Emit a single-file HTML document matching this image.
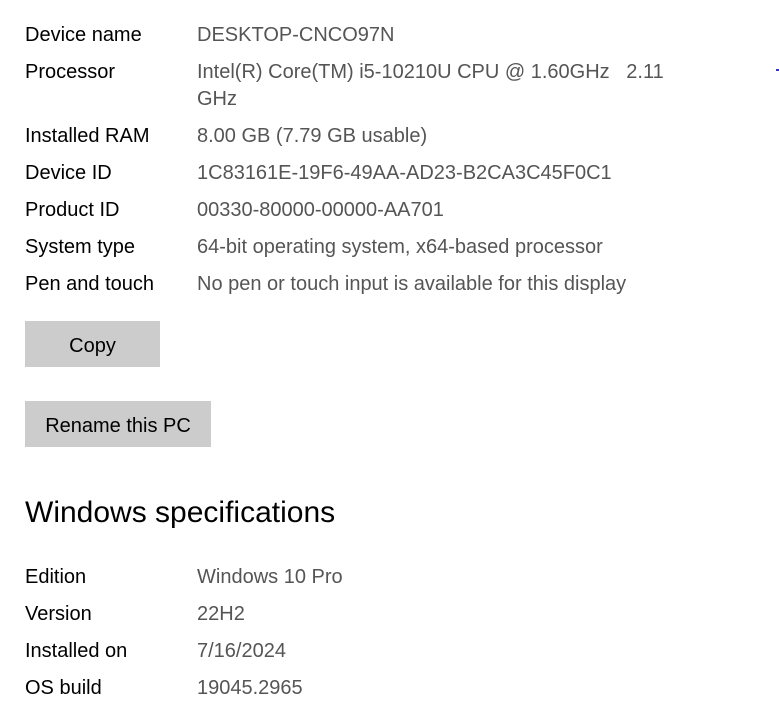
<!DOCTYPE html>
<html><head><meta charset="utf-8"><style>
body{margin:0;width:779px;height:695px;background:#fff;overflow:hidden;position:relative;font-family:"Liberation Sans",sans-serif;font-size:20px;}
.l,.v{position:absolute;line-height:27px;white-space:nowrap;}
.l{left:25px;color:#000;}
.v{left:197px;color:#555;}
.btn{position:absolute;left:25px;background:#ccc;color:#000;text-align:center;font-size:20px;}
h2{position:absolute;left:25px;top:493px;margin:0;font-weight:normal;font-size:30px;line-height:40px;color:#000;}
</style></head><body>
<div class="l" style="top:22px">Device name</div><div class="v" style="top:22px">DESKTOP-CNCO97N</div>
<div class="l" style="top:59px">Processor</div><div class="v" style="top:59px">Intel(R) Core(TM) i5-10210U CPU @ 1.60GHz &nbsp; 2.11</div>
<div class="v" style="top:86px">GHz</div>
<div class="l" style="top:123px">Installed RAM</div><div class="v" style="top:123px">8.00 GB (7.79 GB usable)</div>
<div class="l" style="top:160px">Device ID</div><div class="v" style="top:160px">1C83161E-19F6-49AA-AD23-B2CA3C45F0C1</div>
<div class="l" style="top:197px">Product ID</div><div class="v" style="top:197px">00330-80000-00000-AA701</div>
<div class="l" style="top:234px">System type</div><div class="v" style="top:234px">64-bit operating system, x64-based processor</div>
<div class="l" style="top:271px">Pen and touch</div><div class="v" style="top:271px">No pen or touch input is available for this display</div>
<div class="btn" style="top:321px;width:135px;height:46px;line-height:50px">Copy</div>
<div class="btn" style="top:401px;width:186px;height:46px;line-height:50px">Rename this PC</div>
<h2>Windows specifications</h2>
<div class="l" style="top:564px">Edition</div><div class="v" style="top:564px">Windows 10 Pro</div>
<div class="l" style="top:601px">Version</div><div class="v" style="top:601px">22H2</div>
<div class="l" style="top:638px">Installed on</div><div class="v" style="top:638px">7/16/2024</div>
<div class="l" style="top:675px">OS build</div><div class="v" style="top:675px">19045.2965</div>
<div style="position:absolute;left:776px;top:69px;width:3px;height:2px;background:#33c"></div>
</body></html>
